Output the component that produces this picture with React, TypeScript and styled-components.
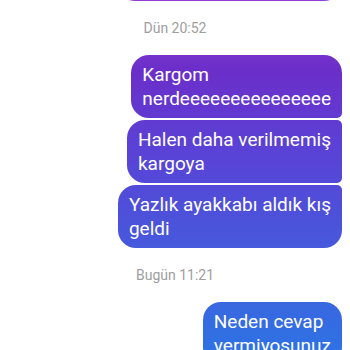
import styled, {createGlobalStyle} from 'styled-components';

const GlobalStyle = createGlobalStyle`
    html, body {
        margin: 0;
        padding: 0;
        background: #ffffff;
        font-family: Roboto, "Noto Sans", "Liberation Sans", sans-serif;
        overflow: hidden;
    }
`;

type Corner = 'big' | 'small';

type Message = {
    lines: string[];
    top: Corner;
    bottom: Corner;
};

type Group = {
    stamp?: string;
    messages: Message[];
};

const groups: Group[] = [
    {
        messages: [{lines: ['Merhaba sipariş ne oldu'], top: 'big', bottom: 'big'}],
    },
    {
        stamp: 'Dün 20:52',
        messages: [
            {lines: ['Kargom', 'nerd' + 'e'.repeat(15)], top: 'big', bottom: 'small'},
            {lines: ['Halen daha verilmemiş', 'kargoya'], top: 'small', bottom: 'small'},
            {lines: ['Yazlık ayakkabı aldık kış', 'geldi'], top: 'small', bottom: 'big'},
        ],
    },
    {
        stamp: 'Bugün 11:21',
        messages: [{lines: ['Neden cevap', 'vermiyosunuz'], top: 'big', bottom: 'big'}],
    },
];

export default function App() {
    return (
        <>
            <GlobalStyle/>
            <Thread>
                {groups.map((group, gi) => (
                    <GroupBlock key={gi}>
                        {group.stamp && <Stamp>{group.stamp}</Stamp>}
                        <Bubbles>
                            {group.messages.map((msg, mi) => (
                                <Bubble key={mi} $top={msg.top} $bottom={msg.bottom}>
                                    {msg.lines.map((line, li) => (
                                        <Line key={li}>{line}</Line>
                                    ))}
                                </Bubble>
                            ))}
                        </Bubbles>
                    </GroupBlock>
                ))}
            </Thread>
        </>
    );
}

const Thread = styled.div`
    display: flex;
    flex-direction: column;
    margin-top: -38px;
    padding: 0 8px;
    height: 388px;
    overflow: hidden;
`;

const GroupBlock = styled.div`
    display: flex;
    flex-direction: column;
`;

const Stamp = styled.div`
    margin: 17px 0 17px;
    text-align: center;
    font-size: 14px;
    line-height: 20px;
    color: #9e9e9e;
`;

const Bubbles = styled.div`
    display: flex;
    flex-direction: column;
    align-items: flex-end;
    gap: 2px;
`;

const Bubble = styled.div<{ $top: Corner; $bottom: Corner }>`
    width: fit-content;
    padding: 8px 11px 7px 11px;
    color: #ffffff;
    font-size: 19px;
    line-height: 24px;
    border-radius: 18px ${p => (p.$top === 'big' ? '18px' : '5px')} ${p => (p.$bottom === 'big' ? '18px' : '5px')} 18px;
    background: linear-gradient(
            to bottom,
            #9140d6 0px,
            #6b2ec9 70px,
            #5a42d6 150px,
            #4c52da 220px,
            #3a66e0 300px,
            #2e72e4 350px
    );
    background-attachment: fixed;
`;

const Line = styled.span`
    display: block;
    white-space: nowrap;
`;
